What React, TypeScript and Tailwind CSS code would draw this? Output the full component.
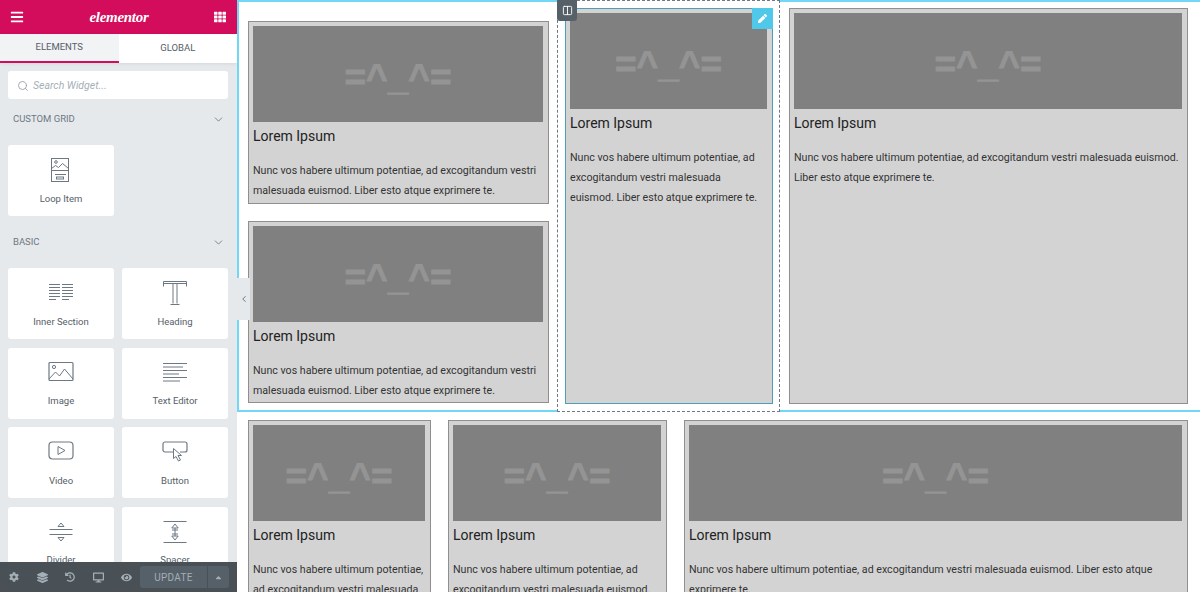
import { Columns2, ChevronDown, ChevronLeft, Search } from "lucide-react";
import { FaBars, FaCaretUp, FaCog, FaDesktop, FaEye, FaHistory, FaLayerGroup, FaPen, FaTh } from "react-icons/fa";
import type { ReactNode } from "react";

const LOREM = "Nunc vos habere ultimum potentiae, ad excogitandum vestri malesuada euismod. Liber esto atque exprimere te.";

function Icon({ children }: { children: ReactNode }) {
  return (
    <svg width="26" height="26" viewBox="0 0 26 26" fill="none" stroke="#6d7882" strokeWidth="1" className="block">
      {children}
    </svg>
  );
}

const LoopIcon = () => (
  <Icon>
    <rect x="3.5" y="1.5" width="17" height="23" />
    <path d="M3.5 11.5l4-3 3 2 4-4 6 5M3.5 13.5h17M7 17.5h11" />
    <circle cx="8" cy="5" r="1.3" />
    <rect x="8.5" y="20" width="7" height="2" />
  </Icon>
);
const SectionIcon = () => (
  <Icon>
    <path d="M1 4.5h11M1 7.5h11M1 10.5h11M1 13.5h11M1 16.5h11M1 19.5h7M14 4.5h11M14 7.5h11M14 10.5h11M14 13.5h11M14 16.5h11M14 19.5h7" />
  </Icon>
);
const HeadingIcon = () => (
  <Icon>
    <path d="M1.5 6.5V1.5h23v5M1.5 3.5h23M11 3.5v20M15 3.5v20M8.5 24.500h9" />
  </Icon>
);
const ImageIcon = () => (
  <Icon>
    <rect x="1" y="2.5" width="24" height="18" rx="1" strokeWidth="1.2" />
    <circle cx="6" cy="7" r="1.6" />
    <path d="M1 19l6.5-7 4 4 5-7 8.5 10" />
  </Icon>
);
const TextIcon = () => (
  <Icon>
    <path d="M1 3.5h24M1 7h20M1 10.5h24M1 14h16M1 17.5h24M1 21h17" />
  </Icon>
);
const VideoIcon = () => (
  <Icon>
    <rect x="1" y="3" width="24" height="17" rx="3.5" strokeWidth="1.2" />
    <path d="M10 7.5v8l7-4z" />
  </Icon>
);
const ButtonIcon = () => (
  <Icon>
    <path d="M11 13H3a2 2 0 0 1-2-2V5a2 2 0 0 1 2-2h20a2 2 0 0 1 2 2v6a2 2 0 0 1-2 2h-5" strokeWidth="1.2" />
    <path d="M11.5 9.5v10l2.5-2 2.5 4.5 2-1-2.5-4.500h3.500z" fill="#fff" />
  </Icon>
);
const DividerIcon = () => (
  <Icon>
    <path d="M1.500 10.500h23M1.500 15.500h23M13 4l-3 3.500h6zM13 22l-3-3.500h6z" />
  </Icon>
);
const SpacerIcon = () => (
  <Icon>
    <path d="M1.500 2.500h23M1.500 23.500h23M13 5l-3.200 4h6.400zM13 21l-3.200-4h6.400zM13 9v8M10 11h6M10 15h6" />
  </Icon>
);

function Tile({ label, icon }: { label: string; icon: ReactNode }) {
  return (
    <div className="flex h-[71px] flex-col items-center rounded-[3px] bg-white pt-[12px]">
      <div className="flex h-[26px] items-center">{icon}</div>
      <div className="mt-[8.500px] text-[9.500px] leading-[14px] text-[#556068]">{label}</div>
    </div>
  );
}

function SectionTitle({ label, className }: { label: string; className: string }) {
  return (
    <div className={`flex items-center justify-between pl-[5px] pr-[3px] text-[9.500px] text-[#6d7882] ${className}`}>
      <span>{label}</span>
      <ChevronDown size={13} strokeWidth={1.6} />
    </div>
  );
}

function Sidebar() {
  return (
    <aside className="flex h-full w-[237px] shrink-0 flex-col bg-[#e6e9ec] font-['Roboto',sans-serif]">
      <header className="flex h-[34px] shrink-0 items-center justify-between bg-[#d30c5c] pl-[10px] pr-[11px] text-white">
        <FaBars size={14} />
        <span className="font-['Liberation_Serif',serif] text-[15px] font-bold italic leading-none tracking-[-0.3px]">elementor</span>
        <FaTh size={12} />
      </header>
      <div className="flex h-[29px] shrink-0 text-[9.500px] text-[#556068] shadow-[0_1px_3px_rgba(0,0,0,0.08)]">
        <div className="flex flex-1 items-center justify-center border-b-2 border-[#d30c5c] bg-[#f1f3f5]">ELEMENTS</div>
        <div className="flex flex-1 items-center justify-center bg-white">GLOBAL</div>
      </div>
      <div className="min-h-0 flex-1 overflow-hidden pl-[8px] pr-[9px] pt-[8px]">
        <div className="flex h-[28px] items-center gap-[4px] rounded-[3px] bg-white pl-[9px] pt-px text-[10.500px] italic text-[#a4afb7]">
          <Search size={12} strokeWidth={1.6} className="text-[#8c969e]" />
          <span>Search Widget...</span>
        </div>
        <SectionTitle label="CUSTOM GRID" className="mb-[6px] h-[40px]" />
        <div className="grid grid-cols-2 gap-2">
          <Tile label="Loop Item" icon={<LoopIcon />} />
        </div>
        <SectionTitle label="BASIC" className="mb-px h-[51px] pt-[2px]" />
        <div className="grid grid-cols-2 gap-x-2 gap-y-[8.500px]">
          <Tile label="Inner Section" icon={<SectionIcon />} />
          <Tile label="Heading" icon={<HeadingIcon />} />
          <Tile label="Image" icon={<ImageIcon />} />
          <Tile label="Text Editor" icon={<TextIcon />} />
          <Tile label="Video" icon={<VideoIcon />} />
          <Tile label="Button" icon={<ButtonIcon />} />
          <Tile label="Divider" icon={<DividerIcon />} />
          <Tile label="Spacer" icon={<SpacerIcon />} />
        </div>
      </div>
      <footer className="flex h-[30px] shrink-0 items-center bg-[#495157] pl-[9px] text-[#a4afb7]">
        <div className="flex w-[131px] items-center justify-between pr-[8px]">
          <FaCog size={10} />
          <FaLayerGroup size={11} />
          <FaHistory size={10} />
          <FaDesktop size={11} />
          <FaEye size={11} />
        </div>
        <div className="flex h-[22px] w-[67px] items-center justify-center rounded-l-[3px] bg-[#556068] text-[10px] tracking-[0.3px]">UPDATE</div>
        <div className="ml-px flex h-[22px] w-[21px] items-center justify-center rounded-r-[3px] bg-[#556068]">
          <FaCaretUp size={9} />
        </div>
      </footer>
    </aside>
  );
}

function Card({ width, active }: { width: string; active?: boolean }) {
  return (
    <div className={`border p-[4px] pr-[5px] bg-[#d3d3d3] ${active ? "border-[#4d9fb8]" : "border-[#8f8f8f]"} ${width}`}>
      <div className="flex h-[96px] items-center justify-center overflow-hidden bg-[#808080] pt-[6px]">
        <span className="font-['Liberation_Sans',sans-serif] text-[37px] font-bold leading-none text-[#949494] [-webkit-text-stroke:0.8px_#949494]">=^_^=</span>
      </div>
      <h3 className="flex h-[29px] items-center text-[14px] text-[#222]">Lorem Ipsum</h3>
      <p className="mt-[10px] text-[10.650px] leading-[20px] text-[#333]">{LOREM}</p>
    </div>
  );
}

export default function App() {
  return (
    <div className="flex h-[592px] w-[1200px] overflow-hidden bg-white font-['Roboto',sans-serif]">
      <Sidebar />
      <main className="relative min-w-0 flex-1 overflow-hidden">
        {/* collapse handle */}
        <div className="absolute left-0 top-[278px] z-30 flex h-[42px] w-[13px] items-center justify-center bg-[#e6e9ec] text-[#556068]">
          <ChevronLeft size={10} strokeWidth={2} />
        </div>
        <section className="flex h-[412px] gap-4 border-y-2 border-l-2 border-[#71d7f7] pl-[9px] pr-[12px] pt-[6px]">
          <div className="flex w-[301px] shrink-0 flex-col gap-[17px] pt-[13px]">
            <Card width="h-[183px]" />
            <Card width="h-[182px]" />
          </div>
          <div className="relative w-[208px] shrink-0">
            {/* selected column overlay */}
            <div className="absolute -bottom-[2px] -left-[8px] -right-[7px] -top-[8px] z-0 border border-dashed border-[#6d7882] bg-white" />
            <div className="absolute -left-[8px] -top-[8px] z-20 flex h-[21px] w-[20px] items-center justify-center rounded-b-[3px] bg-[#556068] text-white">
              <Columns2 size={11} />
            </div>
            <div className="relative z-10">
              <Card width="h-[396px]" active />
            </div>
            <div className="absolute right-0 top-0 z-20 flex h-[21px] w-[21px] items-center justify-center bg-[#4fc8ea] text-white">
              <FaPen size={9} />
            </div>
          </div>
          <div className="min-w-0 flex-1">
            <Card width="h-[396px]" />
          </div>
        </section>
        <section className="mt-[8px] flex gap-[17px] pl-[11px] pr-[12px]">
          <Card width="w-[183px] shrink-0" />
          <Card width="w-[219px] shrink-0" />
          <Card width="min-w-0 flex-1" />
        </section>
      </main>
    </div>
  );
}
